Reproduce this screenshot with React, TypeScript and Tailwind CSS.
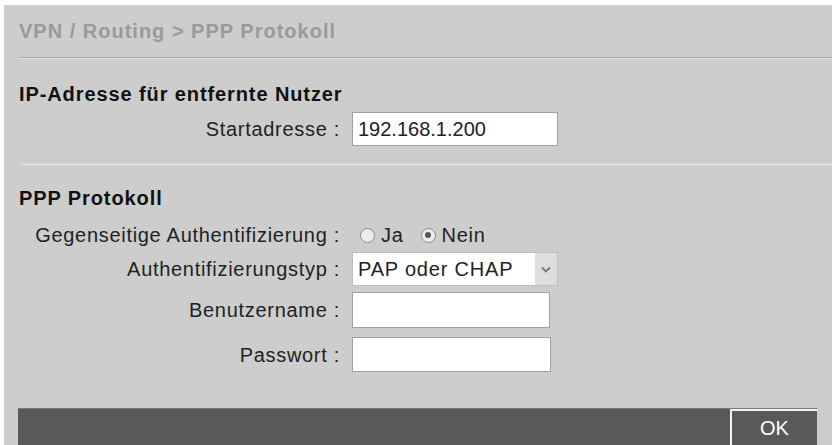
import React from 'react';

const font = { fontFamily: '"Liberation Sans", Arial, sans-serif' };

const Label: React.FC<{ text: string }> = ({ text }) => (
  <div className="w-[337px] shrink-0 pr-[1px] text-right text-[20px] tracking-[0.7px] text-[#222]">{text} :</div>
);

const Radio: React.FC<{ checked?: boolean; label: string }> = ({ checked, label }) => (
  <label className="flex items-center gap-[6px] text-[20px] tracking-[0.7px] text-[#222]">
    <span className="flex h-[15px] w-[15px] shrink-0 items-center justify-center rounded-full border border-[#8a8a8a] bg-[#ececec]">
      {checked && <span className="h-[6px] w-[6px] rounded-full bg-[#555]" />}
    </span>
    {label}
  </label>
);

export default function App() {
  return (
    <div className="h-[445px] w-[837px] bg-white pl-[4px] pr-[5px] pt-[5px]" style={font}>
      <div className="flex h-full flex-col bg-[#cdcdcd]">
        <div className="flex h-[52px] items-center pl-[15px] text-[20px] font-bold tracking-[1px] text-[#9a9a9a]">
          VPN / Routing &gt; PPP Protokoll
        </div>
        <div className="ml-[15px] h-[2px] border-t border-[#a9a9a9] bg-[#e2e2e2]" />

        <div className="mt-[19px] flex h-[30px] items-center pl-[15px] pt-[2px] text-[20px] font-bold tracking-[0.9px] text-[#111]">
          IP-Adresse für entfernte Nutzer
        </div>
        <div className="mt-[4px] flex h-[34px] items-center">
          <Label text="Startadresse" />
          <input
            readOnly
            value="192.168.1.200"
            className="ml-[11px] h-[34px] w-[206px] border border-[#a0a0a0] bg-white px-[5px] text-[20px] text-[#222] outline-none"
          />
        </div>
        <div className="ml-[18px] mt-[18px] h-[1px] bg-[#ececec]" />

        <div className="mt-[18px] flex h-[30px] items-center pl-[15px] text-[20px] font-bold tracking-[0.9px] text-[#111]">
          PPP Protokoll
        </div>
        <div className="mt-[7px] flex h-[30px] items-center">
          <Label text="Gegenseitige Authentifizierung" />
          <div className="ml-[19px] flex items-center gap-[17px]">
            <Radio label="Ja" />
            <Radio checked label="Nein" />
          </div>
        </div>
        <div className="mt-[2px] flex h-[34px] items-center">
          <Label text="Authentifizierungstyp" />
          <div className="ml-[11px] flex h-[34px] w-[206px] border border-[#bdbdbd] bg-white">
            <div className="flex flex-1 items-center pl-[5px] text-[20px] tracking-[0.8px] text-[#222]">PAP oder CHAP</div>
            <div className="flex w-[22px] items-center justify-center bg-[#dedede]">
              <svg width="10" height="7" viewBox="0 0 10 7">
                <path d="M1 1.5 L5 5.5 L9 1.5" fill="none" stroke="#777" strokeWidth="1.8" />
              </svg>
            </div>
          </div>
        </div>
        <div className="mt-[5px] flex h-[37px] items-center">
          <Label text="Benutzername" />
          <input readOnly className="ml-[11px] h-[36px] w-[198px] border border-[#a0a0a0] bg-white outline-none" />
        </div>
        <div className="mt-[9px] flex h-[35px] items-center">
          <Label text="Passwort" />
          <input
            readOnly
            type="password"
            className="ml-[11px] h-[35px] w-[199px] border border-[#a0a0a0] bg-white outline-none"
          />
        </div>

        <div className="ml-[14px] mr-[15px] mt-auto flex h-[37px] justify-end border-t border-[#7a7a7a] bg-[#595959]">
          <button className="w-[87px] border-l-2 border-t-2 border-[#f2f2f2] bg-[#595959] text-[20px] text-white">
            OK
          </button>
        </div>
      </div>
    </div>
  );
}
